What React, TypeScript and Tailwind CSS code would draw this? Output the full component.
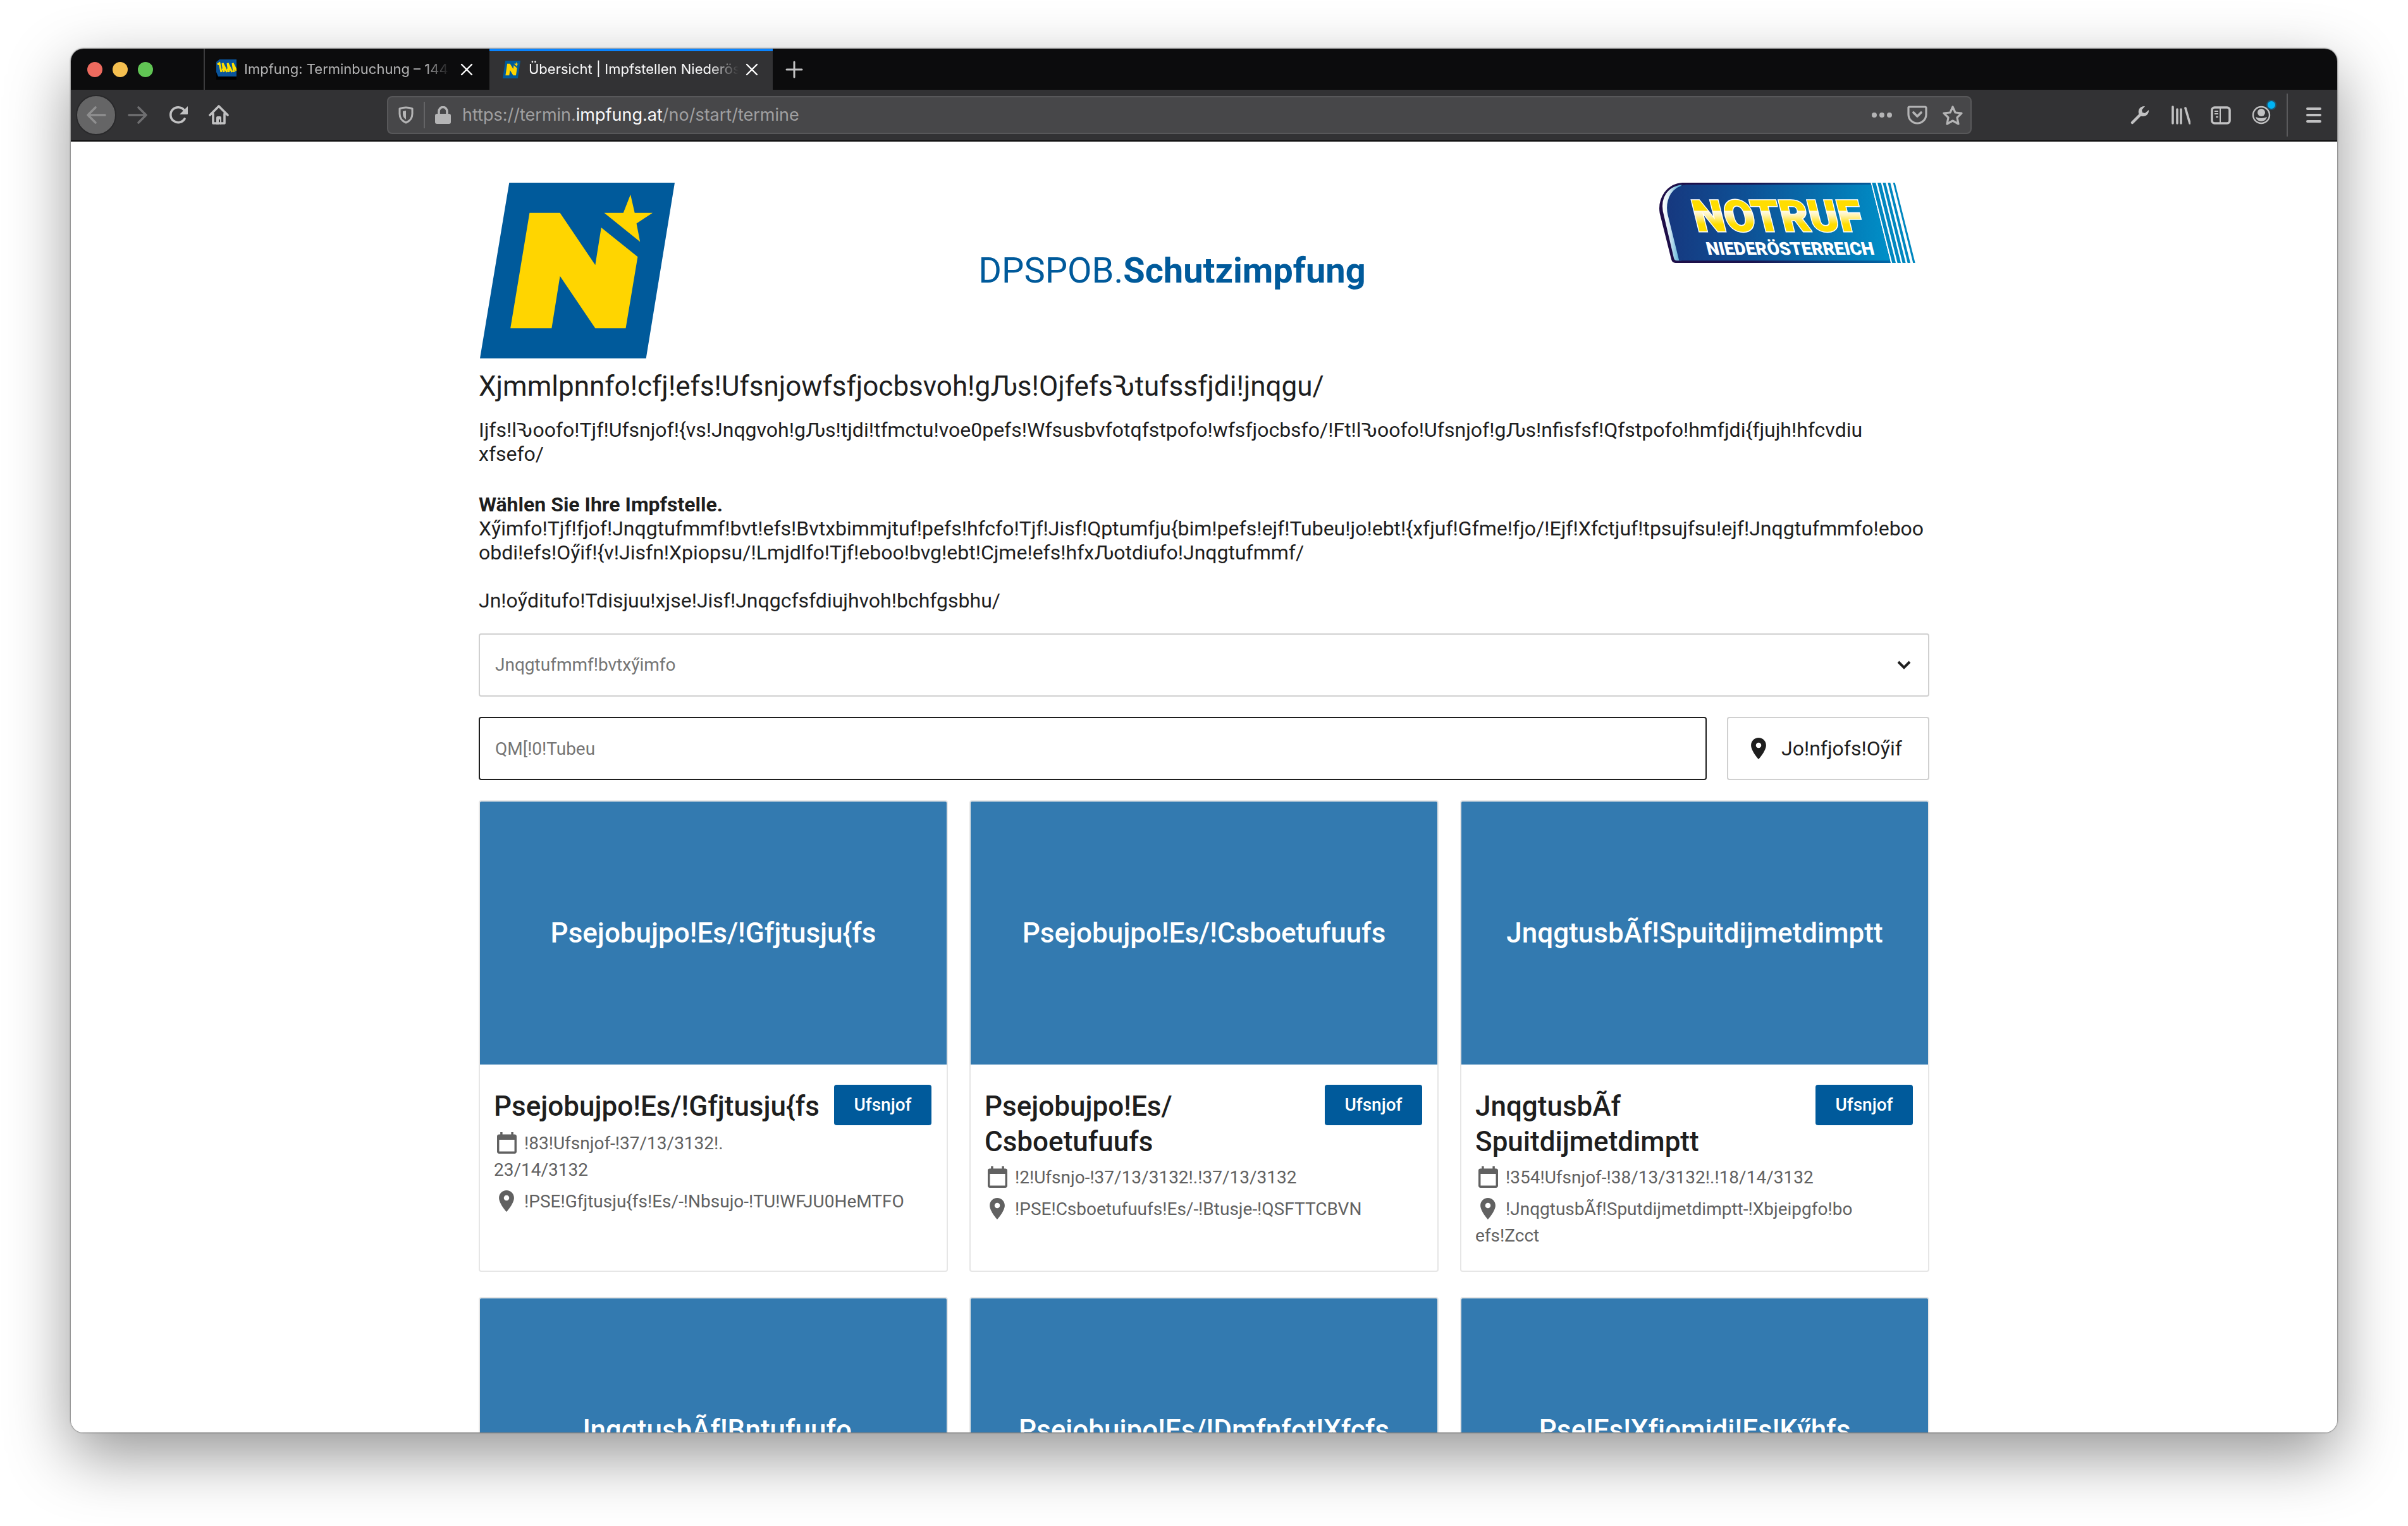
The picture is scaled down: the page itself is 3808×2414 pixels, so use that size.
import React from "react";

type Site = {
  banner: string;
  title: string[];
  dates: string[];
  address: string[];
};

const sites: Site[] = [
  {
    banner: "Psejobujpo!Es/!Gfjtusju{fs",
    title: ["Psejobujpo!Es/!Gfjtusju{fs"],
    dates: ["!83!Ufsnjof-!37/13/3132!.", "23/14/3132"],
    address: ["!PSE!Gfjtusju{fs!Es/-!Nbsujo-!TU!WFJU0HeMTFO"],
  },
  {
    banner: "Psejobujpo!Es/!Csboetufuufs",
    title: ["Psejobujpo!Es/", "Csboetufuufs"],
    dates: ["!2!Ufsnjo-!37/13/3132!.!37/13/3132"],
    address: ["!PSE!Csboetufuufs!Es/-!Btusje-!QSFTTCBVN"],
  },
  {
    banner: "JnqgtusbÃf!Spuitdijmetdimptt",
    title: ["JnqgtusbÃf", "Spuitdijmetdimptt"],
    dates: ["!354!Ufsnjof-!38/13/3132!.!18/14/3132"],
    address: ["!JnqgtusbÃf!Sputdijmetdimptt-!Xbjeipgfo!bo", "efs!Zcct"],
  },
  {
    banner: "JnqgtusbÃf!Bntufuufo",
    title: ["JnqgtusbÃf", "Bntufuufo"],
    dates: [],
    address: [],
  },
  {
    banner: "Psejobujpo!Es/!Dmfnfot!Xfcfs",
    title: ["Psejobujpo!Es/", "Dmfnfot!Xfcfs"],
    dates: [],
    address: [],
  },
  {
    banner: "Pse!Es!Xfjomjdi!Es!Kӳhfs",
    title: ["Pse!Es!Xfjomjdi", "Es!Kӳhfs"],
    dates: [],
    address: [],
  },
];

function Lines({ lines }: { lines: string[] }) {
  return (
    <>
      {lines.map((line, i) => (
        <React.Fragment key={line}>
          {i > 0 && <br />}
          {line}
        </React.Fragment>
      ))}
    </>
  );
}

function StateLogo({ className }: { className: string }) {
  return (
    <svg className={className} viewBox="20 57 326 833" preserveAspectRatio="none" aria-hidden="true">
      <path fill="#005a9b" d="M69 57H346L298 890H20Z" />
      <path
        fill="#ffd500"
        d="M103 200H154L213 447L223 270L284 408L264 747H213L154 500L140 747H71ZM272 113L279 200H309L282 250L288 337L228 200H260Z"
      />
    </svg>
  );
}

function NotrufLogo() {
  return (
    <svg className="mr-[22px] h-[127px] w-[405px] shrink-0" viewBox="135 60 1215 381" role="img" aria-label="Notruf Niederösterreich">
      <defs>
        <linearGradient id="plate" x1="0" x2="1" y1="0" y2="0">
          <stop offset="0" stopColor="#16387f" />
          <stop offset="0.35" stopColor="#0e5095" />
          <stop offset="0.75" stopColor="#0576b3" />
          <stop offset="1" stopColor="#0090c8" />
        </linearGradient>
        <linearGradient id="rim" x1="0" x2="1" y1="0" y2="0">
          <stop offset="0" stopColor="#1e0d47" />
          <stop offset="0.4" stopColor="#1b1450" />
          <stop offset="1" stopColor="#0068a8" />
        </linearGradient>
        <linearGradient id="shine" x1="0" x2="1" y1="0" y2="0">
          <stop offset="0" stopColor="#ffffff" />
          <stop offset="0.3" stopColor="#d5e9f3" />
          <stop offset="1" stopColor="#0a8cc4" />
        </linearGradient>
        <linearGradient id="gold" gradientUnits="userSpaceOnUse" x1="0" x2="0" y1="100" y2="310">
          <stop offset="0" stopColor="#ffdd00" />
          <stop offset="0.44" stopColor="#ffdd00" />
          <stop offset="0.45" stopColor="#fffbe8" />
          <stop offset="0.55" stopColor="#fff3b0" />
          <stop offset="0.75" stopColor="#ffdd00" />
          <stop offset="1" stopColor="#ffdd00" />
        </linearGradient>
      </defs>
      <path fill="url(#rim)" d="M245 60H1138L1233 441H212Q196 441 192 424L137 205Q128 150 160 105Q194 62 245 60Z" />
      <path fill="url(#shine)" d="M262 69Q200 68 168 110Q144 145 152 195L204 418Q207 430 218 430H240V69Z" />
      <path fill="url(#plate)" d="M262 69H1140L1230 430H229L176 215Q162 160 190 112Q215 76 262 69Z" />
      <path
        fill="#0087bf"
        d="M1144 60H1162L1257 441H1240ZM1170 60H1187L1281 441H1265ZM1195 60H1209L1304 441H1289ZM1219 60H1231L1326 441H1313ZM1244 60H1253L1349 441H1339Z"
      />
      <g transform="skewX(14)" fontFamily="Roboto, sans-serif" fontWeight="900">
        <text x="242" y="290" fontSize="208" fill="url(#gold)" stroke="#fff" strokeWidth="9" paintOrder="stroke">
          NOTRUF
        </text>
        <text x="266" y="402" fontSize="84" fill="#fff">
          NIEDERÖSTERREICH
        </text>
      </g>
    </svg>
  );
}

function AmbulanceIcon() {
  return (
    <svg className="size-8 shrink-0" viewBox="0 0 32 32" aria-hidden="true">
      <path fill="#000" d="M0 16H32V32H0Z" />
      <path fill="#0a549b" d="M5 0H32V27H3L0 20V4Z" />
      <path
        fill="none"
        stroke="#ffe000"
        strokeWidth="3"
        d="M2 8L5 6L8 20M12 20L10 6L17 20M9 16H16M20 20L18 6L25 20M17 16H24M28 20L26 6L32 18"
      />
    </svg>
  );
}

function CloseIcon() {
  return (
    <svg className="size-5" viewBox="0 0 20 20" fill="none" stroke="currentColor" strokeWidth="2.4" strokeLinecap="round" aria-hidden="true">
      <path d="M2 2L18 18M18 2L2 18" />
    </svg>
  );
}

function PinIcon({ className }: { className: string }) {
  return (
    <svg className={className} viewBox="5 2 14 20" fill="currentColor" aria-hidden="true">
      <path d="M12 2C8.13 2 5 5.13 5 9c0 5.25 7 13 7 13s7-7.75 7-13c0-3.87-3.13-7-7-7zm0 9.5a2.5 2.5 0 1 1 0-5 2.5 2.5 0 0 1 0 5z" />
    </svg>
  );
}

function CalendarIcon() {
  return (
    <svg className="h-[34px] w-[31px]" viewBox="3 1 18 20" preserveAspectRatio="none" fill="currentColor" aria-hidden="true">
      <path fillRule="evenodd" d="M19 3H18V1H16V3H8V1H6V3H5Q3 3 3 5V19Q3 21 5 21H19Q21 21 21 19V5Q21 3 19 3ZM19 19H5V8H19Z" />
    </svg>
  );
}

function TabStrip() {
  return (
    <div className="flex h-[65px] shrink-0 items-stretch bg-[#0c0c0d]">
      <div className="flex w-[210px] items-center gap-4 pl-[26px]">
        <span className="size-6 rounded-full bg-[#ed6a5e]" />
        <span className="size-6 rounded-full bg-[#f5bf4f]" />
        <span className="size-6 rounded-full bg-[#61c554]" />
      </div>
      <div className="flex w-[452px] items-center border-l-2 border-[#3c3c3e] pl-[18px] text-[#b5b5b6]">
        <AmbulanceIcon />
        <span className="ml-3 w-[326px] overflow-hidden text-[22px] whitespace-nowrap [mask-image:linear-gradient(to_right,black_88%,transparent)]">
          Impfung: Terminbuchung – 144
        </span>
        <button aria-label="Tab schließen" className="ml-4 text-white">
          <CloseIcon />
        </button>
      </div>
      <div className="flex w-[448px] items-center border-t-4 border-[#0a84ff] bg-[#323234] pb-1 pl-[21px] text-[#f9f9fa]">
        <StateLogo className="h-7 w-7 shrink-0" />
        <span className="ml-[13px] w-[332px] overflow-hidden text-[22px] whitespace-nowrap [mask-image:linear-gradient(to_right,black_86%,transparent)]">
          Übersicht | Impfstellen Niederös
        </span>
        <button aria-label="Tab schließen" className="ml-[11px] text-white">
          <CloseIcon />
        </button>
      </div>
      <button aria-label="Neuer Tab" className="ml-5 text-[#c2c2c3]">
        <svg className="size-7" viewBox="0 0 28 28" fill="none" stroke="currentColor" strokeWidth="3" strokeLinecap="round" aria-hidden="true">
          <path d="M14 2V26M2 14H26" />
        </svg>
      </button>
    </div>
  );
}

function Toolbar() {
  return (
    <div className="flex h-[82px] shrink-0 items-center border-b-2 border-[#0c0c0d] bg-[#323234] text-[#c1c1c2]">
      <div className="flex w-[500px] shrink-0 items-center pl-2">
        <button aria-label="Zurück" className="flex size-16 items-center justify-center rounded-full border-2 border-[#29292b] bg-[#656566] text-[#8e8e8f]">
          <svg className="size-8" viewBox="0 0 32 32" fill="none" stroke="currentColor" strokeWidth="3.6" strokeLinecap="round" strokeLinejoin="round" aria-hidden="true">
            <path d="M30 16H3M15 4L3 16L15 28" />
          </svg>
        </button>
        <button aria-label="Vor" className="ml-[18px] text-[#6e6e70]">
          <svg className="size-8" viewBox="0 0 32 32" fill="none" stroke="currentColor" strokeWidth="3.6" strokeLinecap="round" strokeLinejoin="round" aria-hidden="true">
            <path d="M2 16H29M17 4L29 16L17 28" />
          </svg>
        </button>
        <button aria-label="Neu laden" className="ml-8">
          <svg className="size-8" viewBox="0 0 32 32" fill="none" stroke="currentColor" strokeWidth="3.6" strokeLinecap="round" aria-hidden="true">
            <path d="M26 22A12 12 0 1 1 25 8" />
            <path fill="currentColor" stroke="none" d="M31 2V14Q31 15 30 15H18Z" />
          </svg>
        </button>
        <button aria-label="Startseite" className="ml-8">
          <svg className="size-8" viewBox="0 0 32 32" fill="none" stroke="currentColor" strokeWidth="3.6" strokeLinecap="round" strokeLinejoin="round" aria-hidden="true">
            <path d="M2 16L16 2L30 16M7 14V29H25V14" />
            <path fill="currentColor" stroke="none" d="M12 31V20Q12 18 14 18H18Q20 18 20 20V31H18V23H16V31Z" />
          </svg>
        </button>
      </div>
      <div className="flex h-[60px] max-w-[2506px] flex-1 items-center rounded-lg border-2 border-[#58585a] bg-[#474749] pr-3 pl-4 text-[#b4b4b5]">
        <svg className="h-7 w-6 shrink-0" viewBox="0 0 24 28" fill="none" stroke="currentColor" strokeWidth="3" strokeLinejoin="round" aria-hidden="true">
          <path d="M2 4Q12 0 22 4V12Q22 22 12 26Q2 22 2 12Z" />
          <path fill="currentColor" stroke="none" d="M12 7V21Q7 18 7 12V8Z" />
        </svg>
        <span className="mx-4 h-[42px] w-0.5 bg-[#646466]" />
        <svg className="h-7 w-[25px] shrink-0" viewBox="0 0 25 28" aria-hidden="true">
          <rect x="0" y="12" width="25" height="16" rx="3" fill="currentColor" />
          <path d="M6 13V8A6.5 6.5 0 0 1 19 8V13" fill="none" stroke="currentColor" strokeWidth="3.6" />
        </svg>
        <span className="ml-[18px] flex-1 text-[27px] whitespace-nowrap text-[#a0a0a1]">
          https://termin.<span className="text-[#f9f9fa]">impfung.at</span>/no/start/termine
        </span>
        <button aria-label="Seitenaktionen">
          <svg className="h-8 w-8" viewBox="0 0 32 32" fill="currentColor" aria-hidden="true">
            <circle cx="4" cy="16" r="4" />
            <circle cx="16" cy="16" r="4" />
            <circle cx="28" cy="16" r="4" />
          </svg>
        </button>
        <button aria-label="In Pocket speichern" className="ml-6">
          <svg className="size-8" viewBox="0 0 32 32" fill="none" stroke="currentColor" strokeWidth="3.2" strokeLinecap="round" strokeLinejoin="round" aria-hidden="true">
            <path d="M2 4Q2 3 4 3H28Q30 3 30 5V15A14 14 0 0 1 2 15Z" />
            <path strokeWidth="3.8" d="M10 12L16 18L22 12" />
          </svg>
        </button>
        <button aria-label="Lesezeichen" className="ml-6">
          <svg className="size-8" viewBox="0 0 32 32" fill="none" stroke="currentColor" strokeWidth="3.2" strokeLinejoin="round" aria-hidden="true">
            <path d="M16 3L20 12L30 13L23 20L25 30L16 25L7 30L9 20L2 13L12 12Z" />
          </svg>
        </button>
      </div>
      <div className="ml-auto flex shrink-0 items-center pr-6">
        <button aria-label="Werkzeuge">
          <svg className="size-8" viewBox="0 0 32 32" aria-hidden="true">
            <path d="M4 28L18 14" stroke="currentColor" strokeWidth="4.5" strokeLinecap="round" />
            <path fill="currentColor" d="M24 2A9 9 0 0 0 14 13Q15 18 20 18A9 9 0 0 0 30 8L24 13L20 12L19 8Z" />
          </svg>
        </button>
        <button aria-label="Bibliothek" className="ml-8">
          <svg className="size-8" viewBox="0 0 32 32" stroke="currentColor" strokeWidth="3.6" strokeLinecap="round" aria-hidden="true">
            <path d="M4 3V29M11 7V29M17 7V29M24 5L31 29" />
          </svg>
        </button>
        <button aria-label="Seitenleiste" className="ml-8">
          <svg className="size-8" viewBox="0 0 32 32" fill="none" stroke="currentColor" aria-hidden="true">
            <rect x="2" y="4" width="28" height="25" rx="4" strokeWidth="3.6" />
            <path strokeWidth="2" d="M15 4V29M6 10H12M6 14H12M8 19H12" />
          </svg>
        </button>
        <button aria-label="Firefox-Konto" className="relative ml-8">
          <svg className="size-8" viewBox="0 0 32 32" aria-hidden="true">
            <circle cx="16" cy="16" r="13" fill="none" stroke="currentColor" strokeWidth="2.4" />
            <circle cx="16" cy="12" r="6" fill="currentColor" />
            <path fill="currentColor" d="M7 19Q16 23 25 19Q23 26 16 26Q9 26 7 19Z" />
          </svg>
          <span className="absolute -top-2 -right-2 size-4 rounded-full border-2 border-[#1f5570] bg-[#00b3f4]" />
        </button>
        <span className="mx-6 h-[68px] w-0.5 bg-[#5a5a5c]" />
        <button aria-label="Menü" className="ml-1">
          <svg className="h-7 w-[26px]" viewBox="0 0 26 28" stroke="currentColor" strokeWidth="4" strokeLinecap="round" aria-hidden="true">
            <path d="M3 4H23M3 14H23M3 24H23" />
          </svg>
        </button>
      </div>
    </div>
  );
}

function SiteCard({ site }: { site: Site }) {
  return (
    <article className="flex h-[746px] min-w-0 flex-col overflow-hidden rounded border-2 border-[#e6e6e6] bg-white">
      <div className="flex h-[416px] shrink-0 items-center justify-center bg-[#337ab0] text-[44px] leading-[56px] font-medium whitespace-nowrap text-white">
        {site.banner}
      </div>
      <div className="pt-8 pr-6 pl-[22px]">
        <div className="flex items-start justify-between gap-4">
          <h2 className="pt-1.5 text-[44px] leading-[56px] font-medium whitespace-nowrap">
            <Lines lines={site.title} />
          </h2>
          <button className="h-16 w-[154px] shrink-0 rounded bg-[#005a9b] text-[28px] font-medium text-white">Ufsnjof</button>
        </div>
        <div className="mt-2 text-[28px] leading-[42px] text-[#616161]">
          <p>
            <span className="mr-3 ml-1 inline-flex h-[34px] w-8 justify-center align-text-bottom">
              <CalendarIcon />
            </span>
            <Lines lines={site.dates} />
          </p>
          <p className="mt-2">
            <span className="mr-3 ml-1 inline-flex h-[34px] w-8 justify-center align-text-bottom">
              <PinIcon className="h-[34px] w-6" />
            </span>
            <Lines lines={site.address} />
          </p>
        </div>
      </div>
    </article>
  );
}

function BookingPage() {
  return (
    <main className="flex-1 overflow-hidden bg-white font-[Roboto,sans-serif] text-[#1e1e1e]">
      <div className="mx-auto max-w-[2294px] pt-[65px]">
        <header className="flex items-start justify-between">
          <StateLogo className="ml-0.5 h-[278px] w-[308px]" />
          <div className="pt-[106px] pl-4 text-[56px] leading-[66px] text-[#005a9b]">
            DPSPOB.<strong className="font-bold">Schutzimpfung</strong>
          </div>
          <NotrufLogo />
        </header>
        <h1 className="mt-4 text-[44px] leading-[56px]">Xjmmlpnnfo!cfj!efs!Ufsnjowfsfjocbsvoh!gԈs!OjfefsԄtufssfjdi!jnqgu/</h1>
        <div className="mt-[22px] text-[32px] leading-[38px]">
          <p>
            Ijfs!lԄoofo!Tjf!Ufsnjof!{"{"}vs!Jnqgvoh!gԈs!tjdi!tfmctu!voe0pefs!Wfsusbvfotqfstpofo!wfsfjocbsfo/!Ft!lԄoofo!Ufsnjof!gԈs!nfisfsf!Qfstpofo!hmfjdi{"{"}fjujh!hfcvdiu
            <br />
            xfsefo/
          </p>
          <p className="mt-[42px]">
            <strong className="font-bold">Wählen Sie Ihre Impfstelle.</strong>
            <br />
            Xӳimfo!Tjf!fjof!Jnqgtufmmf!bvt!efs!Bvtxbimmjtuf!pefs!hfcfo!Tjf!Jisf!Qptumfju{"{"}bim!pefs!ejf!Tubeu!jo!ebt!{"{"}xfjuf!Gfme!fjo/!Ejf!Xfctjuf!tpsujfsu!ejf!Jnqgtufmmfo!eboo
            <br />
            obdi!efs!Oӳif!{"{"}v!Jisfn!Xpiopsu/!Lmjdlfo!Tjf!eboo!bvg!ebt!Cjme!efs!hfxԈotdiufo!Jnqgtufmmf/
          </p>
          <p className="mt-[38px]">Jn!oӳditufo!Tdisjuu!xjse!Jisf!Jnqgcfsfdiujhvoh!bchfgsbhu/</p>
        </div>
        <form className="mt-[33px] text-[28px]">
          <div className="relative">
            <select
              aria-label="Jnqgtufmmf!bvtxӳimfo"
              className="block h-[100px] w-full appearance-none rounded border-2 border-[#d0d0d0] bg-white px-6 text-[#757575]"
            >
              <option>Jnqgtufmmf!bvtxӳimfo</option>
            </select>
            <svg
              className="pointer-events-none absolute top-[42px] right-[28px] h-4 w-6"
              viewBox="0 0 24 16"
              fill="none"
              stroke="currentColor"
              strokeWidth="4"
              aria-hidden="true"
            >
              <path d="M3 3L12 12L21 3" />
            </svg>
          </div>
          <div className="mt-8 flex gap-8">
            <input
              aria-label="QM[!0!Tubeu"
              placeholder="QM[!0!Tubeu"
              className="h-[100px] min-w-0 flex-1 rounded border-2 border-[#1e1e1e] px-6 placeholder:text-[#757575]"
            />
            <button type="button" className="flex h-[100px] w-80 items-center gap-6 rounded border-2 border-[#d0d0d0] pl-9 text-[32px] whitespace-nowrap">
              <PinIcon className="h-[34px] w-6" />
              Jo!nfjofs!Oӳif
            </button>
          </div>
        </form>
        <section className="mt-8 grid grid-cols-3 gap-x-[34px] gap-y-10">
          {sites.map((site) => (
            <SiteCard key={site.banner} site={site} />
          ))}
        </section>
      </div>
    </main>
  );
}

export default function App() {
  return (
    <div className="flex h-screen overflow-hidden bg-white px-28 pt-[77px] pb-[148px] font-[Inter,sans-serif]">
      <div className="flex min-w-0 flex-1 flex-col overflow-hidden rounded-[20px] shadow-[0_0_2px_1px_rgba(0,0,0,0.35),0_36px_100px_rgba(0,0,0,0.42)]">
        <TabStrip />
        <Toolbar />
        <BookingPage />
      </div>
    </div>
  );
}
